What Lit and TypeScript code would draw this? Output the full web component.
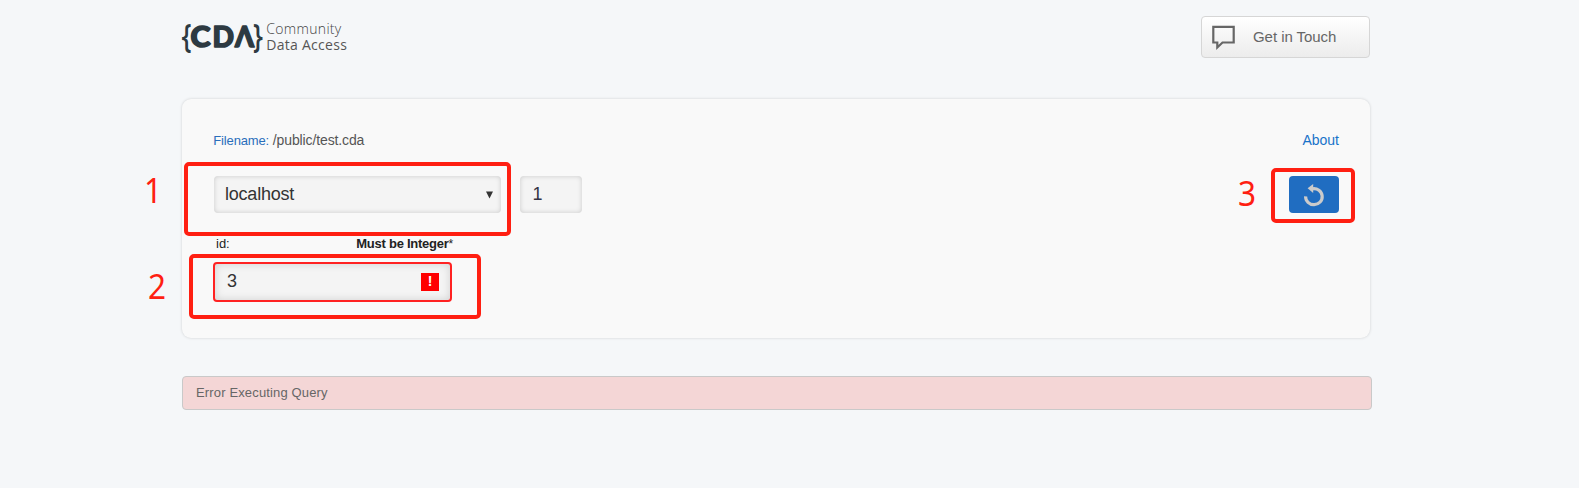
import { LitElement, html, css } from "lit";
import { customElement } from "lit/decorators.js";

@customElement("app-root")
export class AppRoot extends LitElement {
  static styles = css`
    :host {
      display: block;
      position: relative;
      box-sizing: border-box;
      height: 488px;
      overflow: hidden;
      padding: 16px 207px 0 182px;
      background: #f5f7f9;
      font-family: "Liberation Sans", Arial, sans-serif;
      color: #444;
    }
    * { box-sizing: border-box; }
    svg { display: block; overflow: visible; }
    header {
      display: flex;
      justify-content: space-between;
      height: 42px;
      margin-right: 2px;
    }
    .touch {
      display: flex;
      align-items: center;
      width: 169px;
      height: 42px;
      padding: 0 0 0 10px;
      gap: 18px;
      border: 1px solid #d6d6d6;
      border-radius: 4px;
      background: linear-gradient(#fff, #ececec);
      font: 15px "Liberation Sans", Arial, sans-serif;
      letter-spacing: -0.05px;
      color: #666;
    }
    .touch span { position: relative; top: -1px; }
    .card {
      height: 239px;
      margin: 41px 2px 0 0;
      padding: 33px 31px 0 32px;
      border-radius: 9px;
      background: #f9f9f9;
      box-shadow: 0 0 3px rgba(0, 0, 0, 0.16);
    }
    .row { display: flex; justify-content: space-between; }
    .info { height: 44px; font-size: 14px; line-height: 17px; color: #555; }
    .info .path { letter-spacing: -0.12px; }
    .info .key { margin-left: -0.7px; font-size: 13px; letter-spacing: -0.15px; color: #2a6ebb; }
    .info a { color: #1873c9; }
    .fields { display: flex; gap: 19px; }
    .field {
      display: flex;
      align-items: center;
      height: 37px;
      border-radius: 4px;
      background: #f4f4f4;
      box-shadow: inset 0 0 5px rgba(0, 0, 0, 0.17);
      font-size: 18px;
      color: #333;
    }
    .select { width: 287px; padding: 0 8px 0 11px; justify-content: space-between; letter-spacing: -0.22px; }
    .page { width: 62px; padding: 0 0 0 12.5px; color: #334; }
    .refresh {
      display: grid;
      place-items: center;
      width: 50px;
      height: 37px;
      padding: 0;
      border: 0;
      border-radius: 4px;
      background: #206dc1;
    }
    .labels {
      display: flex;
      justify-content: space-between;
      width: 238px;
      margin: 23px 0 0 2px;
      height: 26px;
      font-size: 13px;
      line-height: 15px;
      color: #222;
    }
    .labels b { letter-spacing: -0.25px; margin-right: 1px; }
    .labels sup { font-size: 12px; font-weight: 400; line-height: 0; vertical-align: baseline; }
    .invalid {
      width: 239px;
      height: 40px;
      margin-left: -1px;
      padding: 0 13px 2px 12px;
      justify-content: space-between;
      border: 2px solid #f22;
      box-shadow: inset 0 0 8px rgba(0, 0, 0, 0.15);
    }
    .mark {
      width: 18px;
      height: 18px;
      margin: 2px -2px 0 0;
      background: #f00;
      color: #fff;
      font-size: 14px;
      font-weight: 700;
      line-height: 17px;
      text-align: center;
    }
    .error {
      height: 34px;
      margin: 38px 0 0;
      padding: 0 13px;
      border: 1px solid #c9c9c9;
      border-radius: 4px;
      background: #f4d6d6;
      font-size: 13px;
      letter-spacing: 0.15px;
      line-height: 31px;
      color: #666;
    }
    .frame {
      position: absolute;
      border: 4px solid #ff1f12;
      border-radius: 5px;
      pointer-events: none;
    }
    .frame-1 { left: 184px; top: 162px; width: 327px; height: 74px; }
    .frame-2 { left: 189px; top: 254px; width: 292px; height: 65px; }
    .frame-3 { left: 1270.5px; top: 168px; width: 84px; height: 55px; }
    .step {
      position: absolute;
      width: 20px;
      font: 35px/40px "Noto Sans", sans-serif;
      color: #ff1f12;
      transform: scaleX(0.9);
    }
    .step-1 { left: 143px; top: 170px; }
    .step-2 { left: 147px; top: 266px; }
    .step-3 { left: 1237px; top: 173px; }
  `;

  render() {
    return html`
      <header>
        <svg width="170" height="42" viewBox="0 0 170 42" fill="#2d3a42">
          <g font-family="Open Sans" font-size="33" font-weight="600">
            <text x="-0.5" y="30.5" textLength="10" lengthAdjust="spacingAndGlyphs">{</text>
            <text x="71" y="30.5" textLength="10" lengthAdjust="spacingAndGlyphs">}</text>
          </g>
          <g font-family="Lato" font-weight="900" font-size="28.5" stroke="#2d3a42" stroke-width="1.5" stroke-linejoin="round">
            <text x="8.5" y="31" textLength="20" lengthAdjust="spacingAndGlyphs">C</text>
            <text x="30.5" y="31" textLength="21.5" lengthAdjust="spacingAndGlyphs">D</text>
            <text x="53" y="31" textLength="19" lengthAdjust="spacingAndGlyphs">Λ</text>
          </g>
          <g font-family="Open Sans" font-size="14">
            <text x="84.3" y="18" font-weight="300" fill="#444" textLength="75">Community</text>
            <text x="84.3" y="34" fill="#555" textLength="80.5">Data Access</text>
          </g>
        </svg>
        <button class="touch">
          <svg width="23" height="24" viewBox="0 0 23 24">
            <path d="M1.3 1.8H21.7V17.5H10.5L5.3 22.5V17.5H1.3Z" fill="none" stroke="#666" stroke-width="2.2" />
          </svg>
          <span>Get in Touch</span>
        </button>
      </header>

      <section class="card">
        <div class="row info">
          <div><span class="key">Filename:</span><span class="path"> /public/test.cda</span></div>
          <a>About</a>
        </div>
        <div class="row">
          <div class="fields">
            <div class="field select">
              <span>localhost</span>
              <svg width="7" height="8" viewBox="0 0 7 8"><path d="M0 .5H7L3.5 7.5Z" fill="#333" /></svg>
            </div>
            <div class="field page">1</div>
          </div>
          <button class="refresh" aria-label="Refresh">
            <svg width="22" height="24" viewBox="0 0 22 24">
              <path d="M2.6 13.4A8.3 8 0 1 0 9.5 5.8" fill="none" stroke="#cbcbcb" stroke-width="3.2" />
              <path d="M4.6 5.2L10.2 1V10Z" fill="#cbcbcb" />
            </svg>
          </button>
        </div>
        <div class="labels">
          <span>id:</span>
          <b>Must be Integer<sup>*</sup></b>
        </div>
        <div class="field invalid"><span>3</span><span class="mark">!</span></div>
      </section>

      <div class="error">Error Executing Query</div>

      <div class="frame frame-1"></div>
      <div class="frame frame-2"></div>
      <div class="frame frame-3"></div>
      <span class="step step-1">1</span>
      <span class="step step-2">2</span>
      <span class="step step-3">3</span>
    `;
  }
}
